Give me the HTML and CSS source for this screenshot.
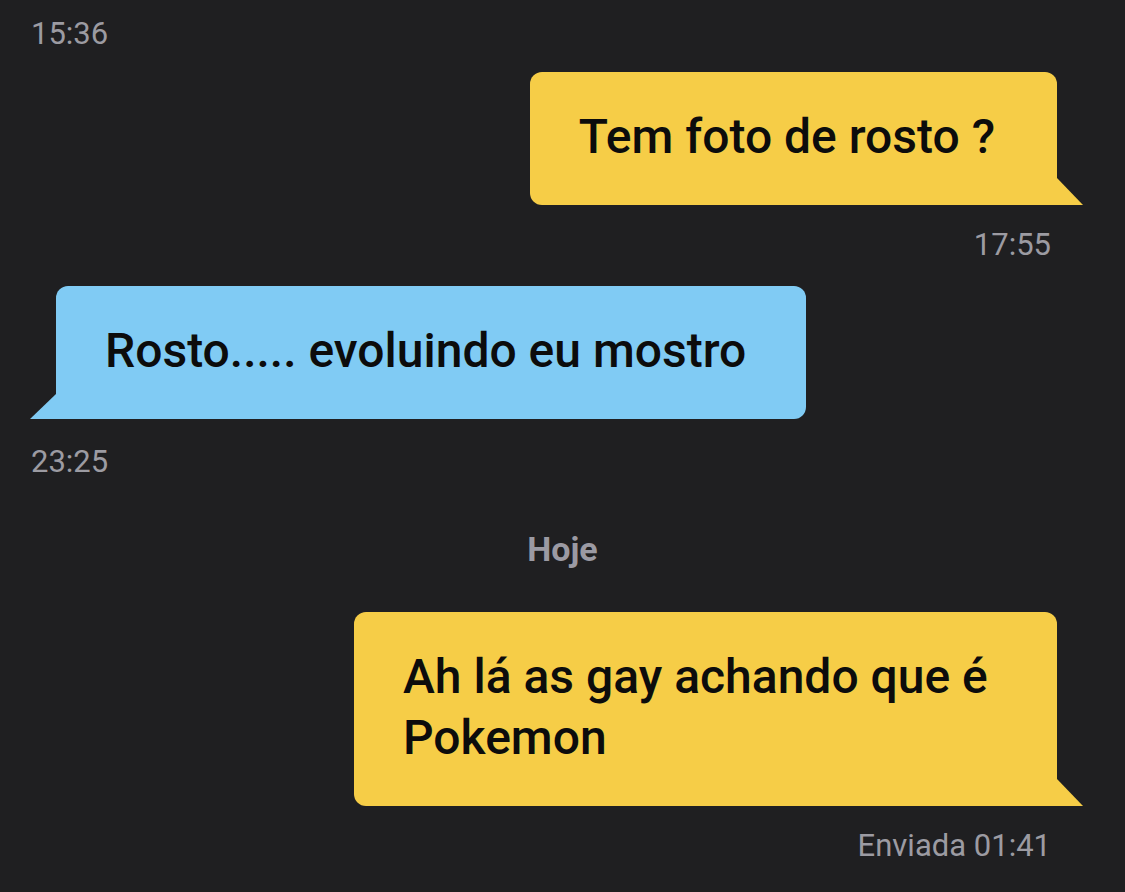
FILE: index.html
```html
<!DOCTYPE html>
<html lang="pt">
<head>
    <meta charset="UTF-8">
    <meta name="viewport" content="width=device-width, initial-scale=1.0">
    <title>Conversa</title>
    <link rel="stylesheet" href="styles.css">
</head>
<body>
    <div class="chat">
        <div class="time in first">15:36</div>

        <div class="msg out">
            <div class="bubble yellow">Tem foto de rosto ?</div>
        </div>
        <div class="time out">17:55</div>

        <div class="msg in">
            <div class="bubble blue">Rosto..... evoluindo eu mostro</div>
        </div>
        <div class="time in">23:25</div>

        <div class="day">Hoje</div>

        <div class="msg out">
            <div class="bubble yellow wide">Ah lá as gay achando que é Pokemon</div>
        </div>
        <div class="time out">Enviada 01:41</div>
    </div>
</body>
</html>
```

FILE: styles.css
```css
/* Page */
body {
    margin: 0;
    background: #1f1f21;
    font-family: Roboto, 'Noto Sans', sans-serif;
}

.chat {
    display: flex;
    flex-direction: column;
    padding-top: 19px;
}

/* Timestamps */
.time {
    font-size: 31px;
    line-height: 30px;
    color: #9c9ba2;
}

.time.in {
    align-self: flex-start;
    margin-left: 31px;
    margin-top: 28px;
}

.time.in.first {
    margin-top: 0;
}

.time.out {
    align-self: flex-end;
    margin-right: 74px;
    margin-top: 25px;
}

.day {
    align-self: center;
    font-size: 34px;
    line-height: 30px;
    font-weight: bold;
    color: #9b9aa3;
    margin-top: 57px;
}

/* Messages */
.msg {
    display: flex;
    margin-top: 23px;
}

.msg.out {
    justify-content: flex-end;
    padding-right: 68px;
}

.msg.in {
    justify-content: flex-start;
    padding-left: 56px;
    margin-top: 26px;
}

.day + .msg {
    margin-top: 48px;
}

.bubble {
    position: relative;
    font-size: 48px;
    font-weight: 500;
    line-height: 61px;
    color: #0c0c0c;
    padding: 34px 62px 38px 49px;
}

.bubble.blue {
    padding-right: 60px;
}

.bubble.wide {
    max-width: 592px;
}

.yellow {
    background: #f6cd47;
    border-radius: 12px 12px 0 12px;
}

.blue {
    background: #80cbf4;
    border-radius: 12px 12px 12px 0;
}

/* tails */
.yellow::after,
.blue::after {
    content: "";
    position: absolute;
    bottom: 0;
    width: 26px;
    height: 27px;
}

.yellow::after {
    right: -26px;
    background: #f6cd47;
    clip-path: polygon(0 0, 100% 100%, 0 100%);
}

.blue::after {
    left: -26px;
    height: 25px;
    background: #80cbf4;
    clip-path: polygon(100% 0, 100% 100%, 0 100%);
}
```
